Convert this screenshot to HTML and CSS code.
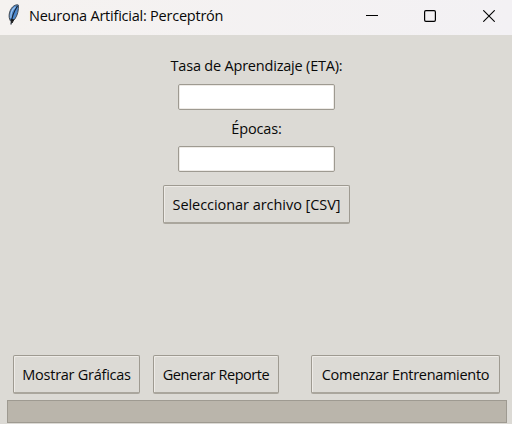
FILE: index.html
```html
<!DOCTYPE html>
<html lang="es">
<head>
<meta charset="utf-8">
<title>Neurona Artificial: Perceptrón</title>
<link rel="stylesheet" href="styles.css">
</head>
<body>
<header class="titlebar">
  <svg class="feather" width="14" height="22" viewBox="0 0 14 22">
    <path d="M3.500 17C1 13 2 7 5.500 3C7.500 1 10 .5 11.300 1C12 5 10.500 12 7.500 15.500Z" fill="#4d88cc" stroke="#444a52" stroke-width="1"/>
    <path d="M4 14C3.500 9 5.500 5 8.500 3" fill="none" stroke="#9cc4ef" stroke-width="1.300"/>
    <path d="M4 20.500C4.500 14 6.500 8 10.500 2" fill="none" stroke="#182536" stroke-width="1.200"/>
    <path d="M4 15L5 19L7 15.500" fill="#111" stroke="#222"/>
  </svg>
  <h1 class="title">Neurona Artificial: Perceptrón</h1>
  <div class="controls">
    <svg width="12" height="12" viewBox="0 0 12 12"><path d="M0 5.500H12" stroke="#000"/></svg>
    <svg width="12" height="12" viewBox="0 0 12 12"><rect x=".6" y=".6" width="10.800" height="10.800" rx="1.300" fill="none" stroke="#000" stroke-width="1.200"/></svg>
    <svg width="12" height="12" viewBox="0 0 12 12"><path d="M.3.3L11.700 11.700M11.700.3L.3 11.700" stroke="#000" stroke-width="1.100"/></svg>
  </div>
</header>
<main class="content">
  <form class="form">
    <label class="label eta" for="eta">Tasa de Aprendizaje (ETA):</label>
    <input class="entry" id="eta" type="text">
    <label class="label epochs" for="epochs">Épocas:</label>
    <input class="entry" id="epochs" type="text">
    <button class="button select" type="button">Seleccionar archivo [CSV]</button>
  </form>
  <div class="actions">
    <button class="button graphs" type="button">Mostrar Gráficas</button>
    <button class="button report" type="button">Generar Reporte</button>
    <button class="button train" type="button">Comenzar Entrenamiento</button>
  </div>
  <div class="progress"></div>
</main>
</body>
</html>
```
FILE: styles.css
```css
* { box-sizing: border-box; }
body {
  margin: 0;
  height: 424px;
  display: flex;
  flex-direction: column;
  overflow: hidden;
  background: #dcdad5;
  color: #080808;
  font: 14.5px/20px "Open Sans", "Noto Sans", sans-serif;
}
.titlebar {
  height: 35px;
  flex: none;
  display: flex;
  align-items: flex-start;
  padding: 4px 17px 0 7px;
  background: linear-gradient(90deg, #f5f2f0, #f3f1f4);
}
.title {
  margin: 2px 0 0 8px;
  font-size: 14.5px;
  font-weight: 400;
  line-height: 20px;
  white-space: nowrap;
  letter-spacing: -0.23px;
}
.controls {
  margin: 6px 0 0 auto;
  display: flex;
  gap: 46px;
}
.controls svg { display: block; }
.controls svg:not(:last-child) { position: relative; left: -1px; }
.content {
  flex: 1;
  display: flex;
  flex-direction: column;
  padding: 0 5px 1px 7px;
}
.form {
  display: flex;
  flex-direction: column;
  align-items: center;
  padding: 21px 1px 0 0;
}
.label {
  height: 20px;
  white-space: nowrap;
}
.eta { letter-spacing: -0.2px; }
.epochs { letter-spacing: -0.15px; line-height: 22px; }
.entry {
  width: 157px;
  height: 26px;
  margin: 8px 0;
  border: 1px solid #9e9a91;
  border-radius: 2px;
  background: #fff;
  box-shadow: inset 0 0 0 1px #eeebe7;
}
.button {
  height: 39px;
  padding: 2px 0 0;
  border: 1px solid #9e9a91;
  border-bottom-width: 2px;
  border-bottom-color: #aaa69d;
  border-radius: 2px;
  background: #dcdad5;
  box-shadow: inset 1px 1px #eeebe7;
  color: inherit;
  font: inherit;
  white-space: nowrap;
}
.select { width: 187px; margin-top: 5px; letter-spacing: -0.05px; }
.actions {
  display: flex;
  margin: auto 7px 6px 6px;
}
.graphs { width: 127px; letter-spacing: -0.26px; }
.report { width: 126px; margin-left: 13px; letter-spacing: -0.46px; }
.train { width: 189px; margin-left: auto; letter-spacing: -0.3px; }
.progress {
  height: 23px;
  border: 1px solid #9e9a91;
  background: #bab5ab;
}
```
